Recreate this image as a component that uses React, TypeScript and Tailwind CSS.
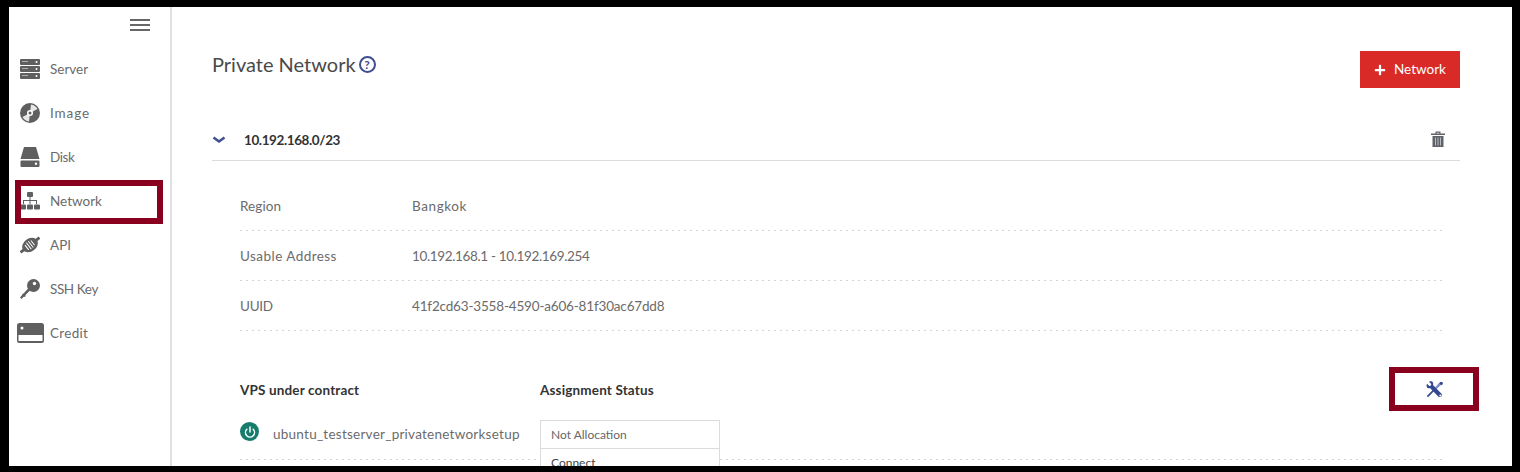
import { FaPlus } from "react-icons/fa";
import { FiPower } from "react-icons/fi";

const fontStack = "font-['Lato','Open_Sans',sans-serif]";
const dottedRow = "bg-[repeating-linear-gradient(to_right,#d4d4d4_0_2px,transparent_2px_6px)] bg-[length:100%_1px] bg-bottom bg-no-repeat";
const iconGray = "#5f5f5f";

function ServerIcon() {
  return (
    <svg width="20" height="20" viewBox="0 0 20 20">
      {[0, 7, 14].map((y) => (
        <g key={y}>
          <rect x="0" y={y} width="20" height="6" rx="1" fill={iconGray} />
          <path d={`M2.500 ${y + 2.500}h5`} stroke="#fff" strokeWidth="1" strokeDasharray="1 1" />
          <circle cx="16.500" cy={y + 3} r="1" fill="#fff" />
        </g>
      ))}
    </svg>
  );
}

function DiscIcon() {
  return (
    <svg width="20" height="20" viewBox="0 0 20 20">
      <circle cx="10" cy="10" r="10" fill={iconGray} />
      <path d="M10 10 11 1.500A8.500 8.500 0 0 1 17.500 6zM10 10 9 18.500A8.500 8.500 0 0 1 2.500 14z" fill="#fff" opacity="0.85" />
      <circle cx="10" cy="10" r="3" fill="#fff" />
      <circle cx="10" cy="10" r="1.500" fill={iconGray} />
    </svg>
  );
}

function DiskIcon() {
  return (
    <svg width="20" height="20" viewBox="0 0 20 20" fill={iconGray}>
      <path d="M4 0h12l3.500 12h-19z" />
      <path d="M1.500 13.500h17a1 1 0 0 1 1 1V19a1 1 0 0 1-1 1h-17a1 1 0 0 1-1-1v-4.500a1 1 0 0 1 1-1z" />
      <circle cx="16" cy="16.800" r="1.200" fill="#fff" />
    </svg>
  );
}

function NetworkIcon() {
  return (
    <svg width="20" height="18" viewBox="0 0 20 18" fill={iconGray}>
      <rect x="7" y="0" width="6" height="5" rx="1" />
      <path d="M9.500 5h1v3h6.500v4h-1V9h-5.500v3h-1V9H4v3H3V8h6.500z" />
      <rect x="0" y="12.500" width="6" height="5" rx="1" />
      <rect x="7" y="12.500" width="6" height="5" rx="1" />
      <rect x="14" y="12.500" width="6" height="5" rx="1" />
    </svg>
  );
}

function ApiIcon() {
  return (
    <svg width="20" height="20" viewBox="0 0 20 20">
      <g transform="rotate(-38 10 10)">
        <ellipse cx="10" cy="10" rx="8.500" ry="6.500" fill={iconGray} />
        <rect x="-2" y="8.500" width="4" height="3" fill={iconGray} />
        <rect x="18" y="8.500" width="4" height="3" fill={iconGray} />
        <path d="M6 7v6M8.500 6v8M11 6v8M13.500 7v6" stroke="#fff" strokeWidth="1" />
      </g>
    </svg>
  );
}

function KeyIcon() {
  return (
    <svg width="20" height="20" viewBox="0 0 20 20" fill={iconGray}>
      <circle cx="13.500" cy="6.500" r="6.500" />
      <path d="M8.500 9 10.500 11 3 18.500 1.500 20 0 18.500z" />
      <path d="m3.500 14.500 2.500 2.500-1.500 1-2.500-2.500z" />
      <circle cx="14.500" cy="4.500" r="1.700" fill="#fff" />
    </svg>
  );
}

function CardIcon() {
  return (
    <svg width="27" height="20" viewBox="0 0 27 20" className="ml-[2px]">
      <rect x="0" y="0" width="27" height="20" rx="2.500" fill={iconGray} />
      <rect x="1.500" y="12" width="24" height="6" fill="#fff" />
      <circle cx="5" cy="5" r="1.500" fill="#fff" />
    </svg>
  );
}

function TrashIcon() {
  return (
    <svg width="14" height="16" viewBox="0 0 14 16" className="ml-auto mr-[15px] mt-[-3px]">
      <path d="M0 2.500h14V4H0zM4.500 2.500V.5h5v2h-1.200V1.700H5.700v.8z" fill="#5f6368" />
      <path d="M1.500 5h11v11h-11z" fill="#5f6368" />
      <path d="M4.500 6.500v8M7 6.500v8M9.500 6.500v8" stroke="#b9bcc0" strokeWidth="1" />
    </svg>
  );
}

function ToolsIcon() {
  return (
    <svg width="17" height="17" viewBox="0 0 17 17">
      {/* screwdriver */}
      <path d="M.8 15 8 7.800l1.200 1.200L2 16.200z" fill="#34478f" />
      <path d="M9 6.500 13.500 1.500 15.500 3.500 10.500 8z" fill="#7d8cc4" />
      <path d="M14 1.200a1.700 1.700 0 0 1 2.400 2.400l-1 .6-2-2z" fill="#34478f" />
      {/* wrench */}
      <path d="M1 2.800 3.300 5l1.600-.4L5.300 3 3 .8C4.800 0 6.400.3 7 1.800c.3.8.3 1.500 0 2.300l8.800 8.800a2.300 2.300 0 0 1-3 3L4 7.100c-.8.300-1.700.3-2.400-.1C.4 6.200.3 4.400 1 2.800z" fill="#34478f" />
      <circle cx="14.300" cy="14.500" r="1" fill="#fff" />
    </svg>
  );
}

const navItems = [
  { label: "Server", icon: <ServerIcon />, textClass: "" },
  { label: "Image", icon: <DiscIcon />, textClass: "tracking-[0.9px]" },
  { label: "Disk", icon: <DiskIcon />, textClass: "tracking-[-0.4px]" },
  { label: "Network", icon: <NetworkIcon />, textClass: "" },
  { label: "API", icon: <ApiIcon />, textClass: "" },
  { label: "SSH Key", icon: <KeyIcon />, textClass: "tracking-[-0.4px]" },
  { label: "Credit", icon: <CardIcon />, textClass: "tracking-[0.3px]" },
];

const details = [
  { label: "Region", labelClass: "tracking-[0.1px]", value: "Bangkok", valueClass: "tracking-[0.6px]" },
  { label: "Usable Address", labelClass: "tracking-[0.45px]", value: "10.192.168.1 - 10.192.169.254", valueClass: "tracking-[-0.35px]" },
  { label: "UUID", labelClass: "tracking-[-0.3px]", value: "41f2cd63-3558-4590-a606-81f30ac67dd8", valueClass: "tracking-[-0.17px]" },
];

export default function App() {
  return (
    <div className={`relative w-[1520px] h-[472px] overflow-hidden bg-black pt-[7px] pl-[9px] pr-[8px] pb-[6px] ${fontStack}`}>
      <div className="flex h-full bg-white overflow-hidden">
        {/* Sidebar */}
        <aside className="w-[163px] shrink-0 border-r-2 border-[#e0e0e0]">
          <div className="flex justify-end pt-[12px] pr-[20px] h-[40px]">
            <div className="flex flex-col gap-[3px] w-[20px]">
              <span className="h-[2px] bg-[#666]" />
              <span className="h-[2px] bg-[#666]" />
              <span className="h-[2px] bg-[#666]" />
            </div>
          </div>
          <nav>
            {navItems.map((item) => (
              <div key={item.label} className="flex items-center h-[44px]">
                <div className="w-[41px] flex justify-center">{item.icon}</div>
                <span className={`text-[13.5px] text-[#6b6b6b] ${item.textClass}`}>{item.label}</span>
              </div>
            ))}
          </nav>
        </aside>

        {/* Main */}
        <main className="flex-1 pl-[40px] pr-[52px] pt-[44px]">
          <div className="flex justify-between items-start h-[37px]">
            <div className="flex items-center gap-[3px]">
              <h1 className="text-[20px] leading-[27px] text-[#4a4a4a]">Private Network</h1>
              <span className="w-[17px] h-[17px] rounded-full border-2 border-[#3f4f8f] flex items-center justify-center text-[12px] font-bold leading-none text-[#3f4f8f]">?</span>
            </div>
            <button className="w-[100px] h-[37px] bg-[#d92a27] text-white text-[13.5px] flex items-center justify-center gap-[8px]">
              <FaPlus size={12} />
              Network
            </button>
          </div>

          <div className="flex items-center h-[44px] pt-[3px] mt-[29px] border-b border-[#dcdcdc]">
            <svg width="14" height="8" viewBox="0 0 14 8" className="mr-[18px]">
              <path d="M1.500 1.500 7 5.500l5.500-4" fill="none" stroke="#3f4f8f" strokeWidth="2.500" />
            </svg>
            <span className="text-[13.5px] font-bold text-[#333] tracking-[-0.4px]">10.192.168.0/23</span>
            <TrashIcon />
          </div>

          <div className="pl-[28px] pr-[17px] pt-[20px]">
            {details.map((row) => (
              <div key={row.label} className={`flex items-center h-[50px] text-[13.5px] text-[#6b6b6b] ${dottedRow}`}>
                <span className={`w-[172px] ${row.labelClass}`}>{row.label}</span>
                <span className={row.valueClass}>{row.value}</span>
              </div>
            ))}

            <div className="flex items-center h-[40px] mt-[39px] text-[13.5px] font-bold text-[#333] tracking-[0.15px]">
              <span className="w-[300px]">VPS under contract</span>
              <span>Assignment Status</span>
            </div>
            <div className={`flex items-start h-[40px] mt-[10px] ${dottedRow}`}>
              <div className="flex items-center w-[300px] h-[28px]">
                <span className="w-[19px] h-[19px] rounded-full bg-[#167c6c] flex items-center justify-center mr-[14px] mt-[-5px]">
                  <FiPower size={12} color="#fff" strokeWidth={3} />
                </span>
                <span className="text-[13.5px] text-[#6b6b6b] tracking-[0.25px]">ubuntu_testserver_privatenetworksetup</span>
              </div>
              <div className="w-[180px] border border-[#dcdcdc] bg-white text-[12px] text-[#666]">
                <div className="h-[28px] flex items-center px-[10px] border-b border-[#dcdcdc]">Not Allocation</div>
                <div className="h-[28px] flex items-center px-[10px] text-[#444]">Connect</div>
              </div>
            </div>
          </div>
        </main>
      </div>

      {/* Annotation boxes */}
      <div className="absolute left-[15px] top-[180px] w-[148px] h-[44px] border-[6px] border-[#8a001f]" />
      <div className="absolute left-[1389px] top-[367px] w-[90px] h-[44px] border-[6px] border-[#8a001f] flex items-center justify-center">
        <ToolsIcon />
      </div>
    </div>
  );
}
